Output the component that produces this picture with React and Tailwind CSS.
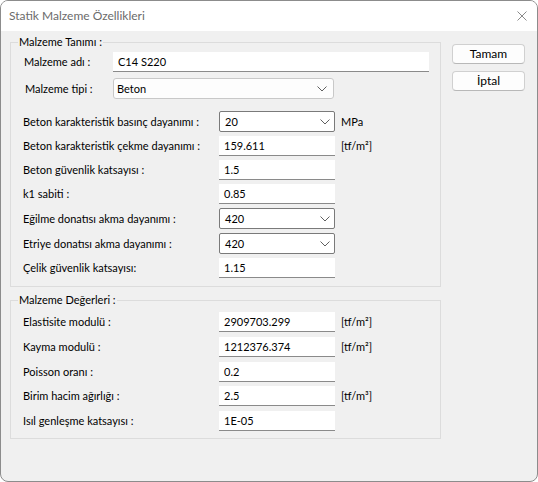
import React from 'react';

function Chevron() {
  return (
    <svg width="10" height="6" viewBox="0 0 10 6" className="shrink-0">
      <path d="M0.5 0.5 L5 5 L9.5 0.5" fill="none" stroke="#606060" strokeWidth="1" />
    </svg>
  );
}

function TextBox({ value, w = 'w-[116px]' }) {
  return (
    <div className={`${w} h-[20px] bg-white border-b border-[#8a8a8a] flex items-center pl-[5px] shrink-0`}>
      {value}
    </div>
  );
}

function Combo({ value }) {
  return (
    <div className="w-[116px] h-[21px] bg-white border border-[#7a7a7a] rounded-[2px] flex items-center justify-between pl-[5px] pr-[4px] shrink-0">
      <span>{value}</span>
      <Chevron />
    </div>
  );
}

function Row({ label, value, combo, unit, mt }) {
  return (
    <div className={`flex items-center ${mt}`}>
      <div className="w-[196px] shrink-0 whitespace-nowrap">{label}</div>
      {combo ? <Combo value={value} /> : <TextBox value={value} />}
      {unit && <span className="ml-[6px] whitespace-nowrap">{unit}</span>}
    </div>
  );
}

export default function App() {
  const defs = [
    { label: 'Beton karakteristik basınç dayanımı :', value: '20', combo: true, unit: 'MPa', mt: 'mt-[12px]' },
    { label: 'Beton karakteristik çekme dayanımı :', value: '159.611', unit: '[tf/m²]', mt: 'mt-[4px]' },
    { label: 'Beton güvenlik katsayısı :', value: '1.5', mt: 'mt-[4px]' },
    { label: 'k1 sabiti :', value: '0.85', mt: 'mt-[4px]' },
    { label: 'Eğilme donatısı akma dayanımı :', value: '420', combo: true, mt: 'mt-[4px]' },
    { label: 'Etriye donatısı akma dayanımı :', value: '420', combo: true, mt: 'mt-[4px]' },
    { label: 'Çelik güvenlik katsayısı:', value: '1.15', mt: 'mt-[4px]' },
  ];
  const values = [
    { label: 'Elastisite modulü :', value: '2909703.299', unit: '[tf/m²]', mt: 'mt-[4px]' },
    { label: 'Kayma modulü :', value: '1212376.374', unit: '[tf/m²]', mt: 'mt-[5px]' },
    { label: 'Poisson oranı :', value: '0.2', mt: 'mt-[5px]' },
    { label: 'Birim hacim ağırlığı :', value: '2.5', unit: '[tf/m³]', mt: 'mt-[4px]' },
    { label: 'Isıl genleşme katsayısı :', value: '1E-05', mt: 'mt-[5px]' },
  ];

  return (
    <div className="w-[538px] h-[482px] border border-[#8c8c8c] rounded-[8px] overflow-hidden bg-[#f0f0f0] flex flex-col text-[11px] leading-[16px] text-black font-['Lato',sans-serif]">
      <div className="h-[30px] bg-white flex items-center justify-between pl-[8px] pr-[10px] shrink-0">
        <span className="text-[#6b6b6b] text-[12px]">Statik Malzeme Özellikleri</span>
        <svg width="10" height="10" viewBox="0 0 10 10">
          <path d="M0.5 0.5 L9.5 9.5 M9.5 0.5 L0.5 9.5" stroke="#8a8a8a" strokeWidth="1" />
        </svg>
      </div>

      <div className="flex-1 flex pt-[3px] pl-[9px]">
        <div className="w-[431px] flex flex-col">
          <fieldset className="border border-[#dcdcdc] p-0 m-0">
            <legend className="ml-[7px] px-[1px]">Malzeme Tanımı :</legend>
            <div className="pl-[12px] pb-[8px] pt-[2px]">
              <div className="flex items-center">
                <div className="w-[90px] shrink-0 pl-[1px] whitespace-nowrap">Malzeme adı :</div>
                <TextBox value="C14 S220" w="w-[316px]" />
              </div>
              <div className="flex items-center mt-[6px]">
                <div className="w-[90px] shrink-0 pl-[2px] whitespace-nowrap">Malzeme tipi :</div>
                <div className="w-[221px] h-[21px] bg-[#fdfdfd] border border-[#c8c8c8] rounded-[3px] flex items-center justify-between pl-[3px] pr-[6px]">
                  <span>Beton</span>
                  <Chevron />
                </div>
              </div>
              {defs.map(d => <Row key={d.label} {...d} />)}
            </div>
          </fieldset>

          <fieldset className="border border-[#dcdcdc] p-0 m-0 mt-[5px]">
            <legend className="ml-[7px] px-[1px]">Malzeme Değerleri :</legend>
            <div className="pl-[12px] pb-[7px]">
              {values.map(d => <Row key={d.label} {...d} />)}
            </div>
          </fieldset>
        </div>

        <div className="ml-[11px] mt-[10px] flex flex-col gap-[7px]">
          <button className="w-[73px] h-[20px] bg-[#fdfdfd] border border-[#d0d0d0] border-b-[#b8b8b8] rounded-[4px] flex items-center justify-center text-[12px]">Tamam</button>
          <button className="w-[73px] h-[20px] bg-[#fdfdfd] border border-[#d0d0d0] border-b-[#b8b8b8] rounded-[4px] flex items-center justify-center text-[12px]">İptal</button>
        </div>
      </div>
    </div>
  );
}
